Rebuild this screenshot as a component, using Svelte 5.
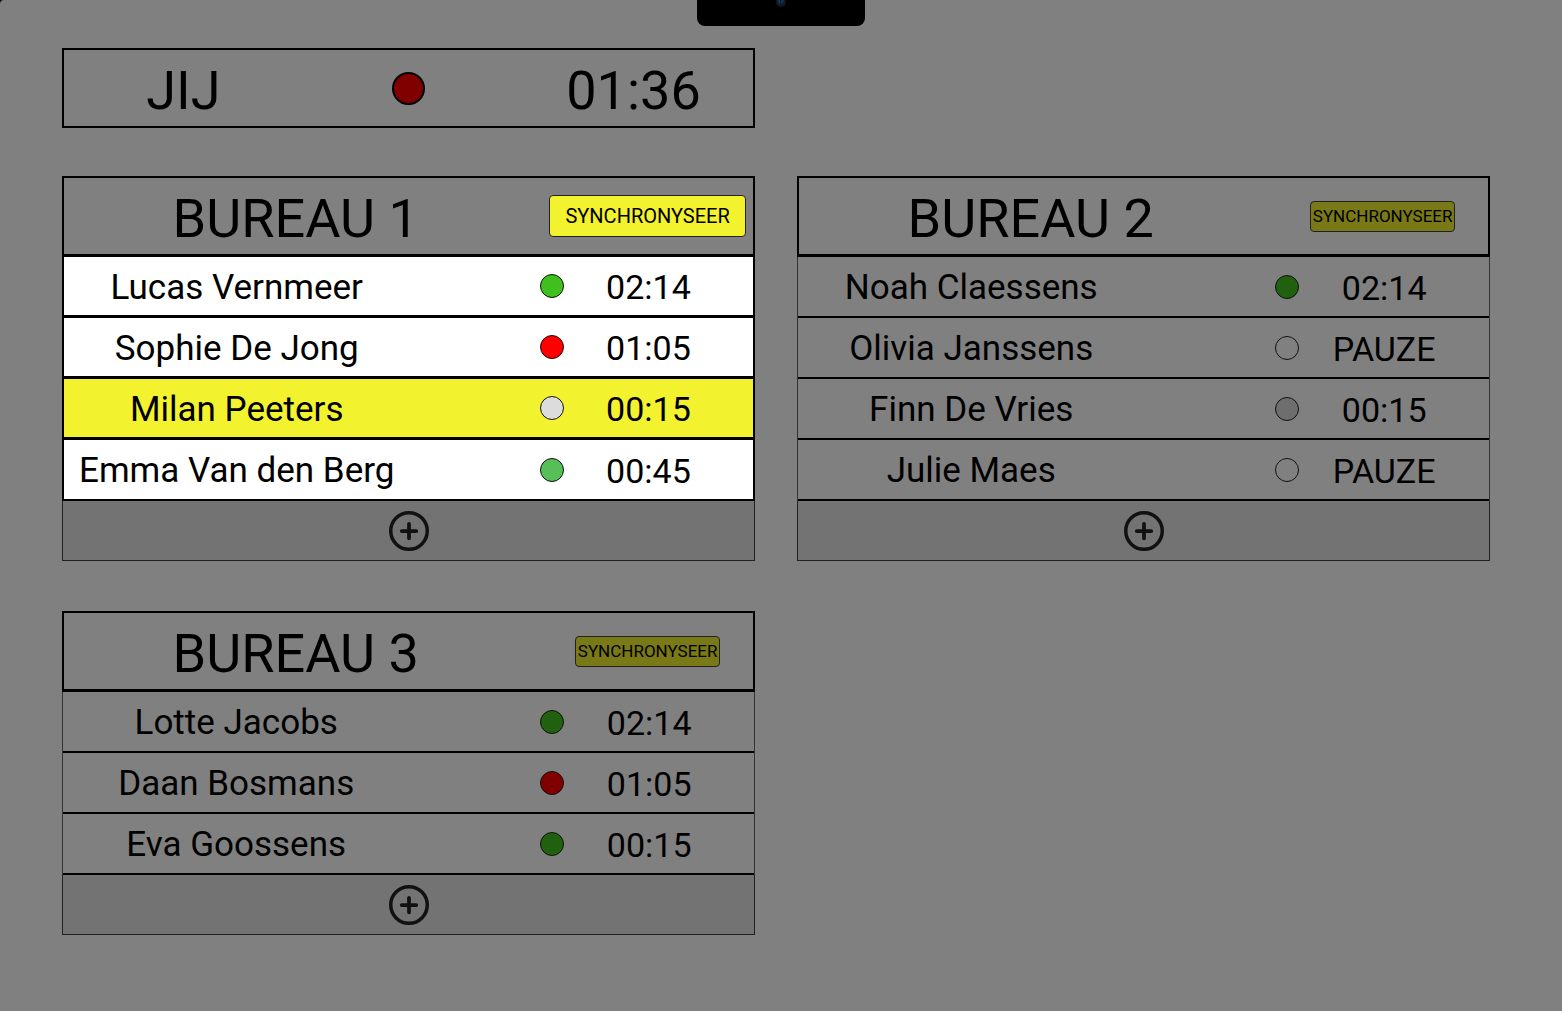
<script>
  const bureaus = [
    {
      id: 1,
      active: true,
      people: [
        { name: 'Lucas Vernmeer', status: 'green', time: '02:14' },
        { name: 'Sophie De Jong', status: 'red', time: '01:05' },
        { name: 'Milan Peeters', status: 'idle', time: '00:15', selected: true },
        { name: 'Emma Van den Berg', status: 'mint', time: '00:45' }
      ]
    },
    {
      id: 2,
      people: [
        { name: 'Noah Claessens', status: 'green', time: '02:14' },
        { name: 'Olivia Janssens', status: 'none', time: 'PAUZE' },
        { name: 'Finn De Vries', status: 'idle', time: '00:15' },
        { name: 'Julie Maes', status: 'none', time: 'PAUZE' }
      ]
    },
    {
      id: 3,
      people: [
        { name: 'Lotte Jacobs', status: 'green', time: '02:14' },
        { name: 'Daan Bosmans', status: 'red', time: '01:05' },
        { name: 'Eva Goossens', status: 'green', time: '00:15' }
      ]
    }
  ];
</script>

<div class="page">
  <div class="notch">
    <svg width="12" height="8" viewBox="0 0 12 8" aria-hidden="true">
      <circle cx="6" cy="2" r="5" fill="#15171a" />
      <path d="M3 0h2v4C3.500 3.500 3 2 3 0Z" fill="#173f4c" />
      <path d="M6 0h3c0 2-1 3.500-3 4Z" fill="#122c66" />
    </svg>
  </div>

  <main>
    <div class="grid top">
      <section class="me">
        <h1>JIJ</h1>
        <span class="dot large red"></span>
        <span class="clock">01:36</span>
      </section>
    </div>

    <div class="grid">
      {#each bureaus as bureau (bureau.id)}
        <section class="bureau" class:active={bureau.active}>
          <header>
            <h2>BUREAU {bureau.id}</h2>
            <div class="action">
              <button class="sync" type="button">SYNCHRONYSEER</button>
            </div>
          </header>
          <table>
            <tbody>
              {#each bureau.people as person (person.name)}
                <tr class:selected={person.selected}>
                  <td class="name">{person.name}</td>
                  <td class="status"><span class="dot {person.status}"></span></td>
                  <td class="time">{person.time}</td>
                </tr>
              {/each}
            </tbody>
          </table>
          <button class="add" type="button" aria-label="Toevoegen">
            <svg width="42" height="42" viewBox="0 0 42 42" fill="none" stroke="#111" stroke-linecap="round" aria-hidden="true">
              <circle cx="21" cy="21" r="18.250" stroke-width="3.500" />
              <path d="M21 13.750v14.500M13.750 21h14.500" stroke-width="3.750" />
            </svg>
          </button>
        </section>
      {/each}
    </div>
  </main>
</div>

<style>
  :global(body) {
    background: #000;
  }

  .page {
    min-height: 100vh;
    box-sizing: border-box;
    padding-bottom: 48px;
    background: #808080;
    border-top-left-radius: 4px;
    font-family: Roboto, 'Noto Sans', sans-serif;
    color: #000;
  }

  .notch {
    display: flex;
    justify-content: center;
    width: 168px;
    height: 26px;
    margin: 0 auto;
    background: #000;
    border-radius: 0 0 8px 8px;
  }

  main {
    padding: 22px 72px 0 62px;
  }

  .grid {
    display: grid;
    grid-template-columns: repeat(2, minmax(0, 1fr));
    gap: 50px 42px;
    align-items: start;
  }

  .top {
    margin-bottom: 48px;
  }

  h1,
  h2 {
    margin: 0;
    font: inherit;
  }

  h1,
  h2,
  .clock {
    padding-top: 5px;
  }

  .me,
  header {
    box-sizing: border-box;
    display: grid;
    align-items: center;
    justify-items: center;
    border: 2px solid #000;
    font-size: 54px;
    line-height: 60px;
  }

  .me {
    grid-template-columns: 240fr 212fr 240fr;
    height: 80px;
  }

  header {
    grid-template-columns: minmax(0, 466fr) minmax(0, 48fr) minmax(0, 146fr) minmax(0, 33fr);
    height: 81px;
    border-bottom-width: 3px;
  }

  .action {
    grid-column: 3;
    display: flex;
    justify-content: center;
    width: 100%;
  }

  .sync {
    flex: none;
    box-sizing: border-box;
    height: 31px;
    padding: 0 2px;
    border: 1px solid #222;
    border-radius: 4px;
    background: #797917;
    color: #000;
    font: 17px/20px Roboto, 'Noto Sans', sans-serif;
  }

  .active .sync {
    height: 42px;
    padding: 0 15px;
    background: #f3f22f;
    font-size: 20px;
  }

  table {
    width: 100%;
    table-layout: fixed;
    border-spacing: 0;
    border: solid #333;
    border-width: 0 1px;
  }

  .active table {
    border: solid #000;
    border-width: 0 2px;
    background: #fff;
  }

  td {
    box-sizing: border-box;
    height: 61px;
    padding: 0;
    border-bottom: 2px solid #000;
    text-align: center;
    vertical-align: middle;
  }

  .active tr:not(:last-child) td {
    border-bottom-width: 3px;
  }

  .selected {
    background: #f3f22f;
  }

  .name {
    width: 51%;
    padding: 2px 6px 0 0;
    font-size: 35px;
  }

  .status {
    width: 23%;
    padding-right: 10px;
    text-align: right;
  }

  .time {
    width: 26%;
    padding: 2px 30px 0 0;
    font-size: 34px;
  }

  .dot {
    box-sizing: border-box;
    display: inline-block;
    width: 24px;
    height: 24px;
    border: 1px solid #111;
    border-radius: 50%;
    vertical-align: middle;
  }

  .dot.large {
    width: 33px;
    height: 33px;
    border: 2px solid #000;
  }

  .red {
    background: #800000;
  }

  .green {
    background: #20600f;
  }

  .idle {
    background: #6e6e6e;
  }

  .active .red {
    background: #f00;
  }

  .active .green {
    background: #40c01f;
  }

  .active .idle {
    background: #dcdcdc;
  }

  .active .mint {
    background: #58bf58;
  }

  .add {
    box-sizing: border-box;
    display: flex;
    align-items: center;
    justify-content: center;
    width: 100%;
    height: 60px;
    padding: 0;
    border: 1px solid #222;
    border-top: 0;
    background: #737373;
  }
</style>
